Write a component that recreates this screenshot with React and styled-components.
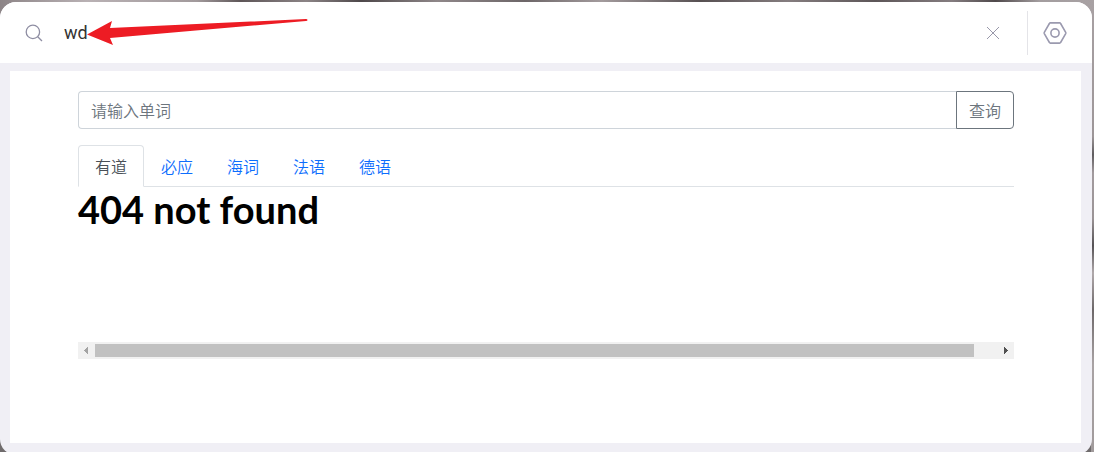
import React, { useState } from 'react';
import styled, { createGlobalStyle } from 'styled-components';

const GlobalStyle = createGlobalStyle`
  * {
    box-sizing: border-box;
  }

  body {
    margin: 0;
    overflow: hidden;
    background:
      linear-gradient(180deg, #a8a1a3, #9d9698 30%, #5f5c5f 34%, #a29b9e 38%, #9b9496 48%, #555255 54%, #b0a9ab 60%, #6d6869 68%, #a9a3a4 80%, #a09a9b) right / 3px 100% no-repeat,
      linear-gradient(90deg, #8d8587, #b9b1b4 8%, #a29a9c 18%, #5e5658 22%, #8c8486 28%, #4e484a 33%, #8f8789 40%, #6d6668 48%, #a39b9d 55%, #575052 64%, #857d7f 72%, #5d5658 80%, #857d80 87%, #4f494b 91%, #a39d9f 95%, #a8a1a3) top / 100% 40px no-repeat,
      #6f6b6c;
    color: #212529;
    font-family: 'Noto Sans CJK SC', 'Liberation Sans', sans-serif;
    font-size: 16px;
    font-weight: 350;
    line-height: 24px;
  }

  button,
  input {
    font-family: inherit;
    font-size: inherit;
    font-weight: inherit;
    line-height: inherit;
  }
`;

const Desktop = styled.main`
  padding: 2px 2px 0 0;
`;

const Window = styled.div`
  position: relative;
  overflow: hidden;
  border-radius: 16px;
  background: #f0eff5;
`;

const SearchBar = styled.header`
  display: flex;
  align-items: center;
  height: 61px;
  padding: 0 25px 0 24px;
  background: #fff;
`;

const CommandInput = styled.input`
  flex: 1;
  min-width: 0;
  margin-left: 20px;
  padding: 0;
  border: none;
  outline: none;
  background: none;
  color: #333;
  font-family: Roboto, 'Noto Sans CJK SC', sans-serif;
  font-size: 18px;
  font-weight: 400;
`;

const IconButton = styled.button`
  display: flex;
  padding: 0;
  border: none;
  background: none;
  cursor: pointer;
`;

const Divider = styled.span`
  width: 1px;
  height: 44px;
  margin: 0 15px 0 26px;
  background: #e4e4e8;
`;

const Arrow = styled.svg`
  position: absolute;
  top: 14px;
  left: 87px;
  pointer-events: none;
`;

const Panel = styled.section`
  margin: 8px 11px 12px 10px;
  padding: 20px 67px 84px 68px;
  background: #fff;
`;

const LookupForm = styled.form`
  display: flex;
  margin-bottom: 16px;
`;

const WordInput = styled.input`
  flex: 1;
  min-width: 0;
  height: 38px;
  padding: 6px 12px;
  border: 1px solid #ced4da;
  border-right: none;
  border-radius: 4px 0 0 4px;
  outline: none;

  &::placeholder {
    color: #6c757d;
    opacity: 1;
  }
`;

const LookupButton = styled.button`
  width: 58px;
  height: 38px;
  padding: 0;
  border: 1px solid #6c757d;
  border-radius: 0 4px 4px 0;
  background: #fff;
  color: #6c757d;
  cursor: pointer;
`;

const Tabs = styled.div`
  display: flex;
  border-bottom: 1px solid #dee2e6;
`;

const Tab = styled.button`
  margin-bottom: -1px;
  padding: 8px 16px;
  border: 1px solid transparent;
  border-radius: 4px 4px 0 0;
  background: none;
  color: #0d6efd;
  cursor: pointer;

  ${({ $active }) =>
    $active &&
    `
    border-color: #dee2e6 #dee2e6 #fff;
    background: #fff;
    color: #495057;
  `}
`;

const Result = styled.div`
  height: 155px;
`;

const Message = styled.h1`
  margin: 0;
  color: #000;
  font-family: Lato, sans-serif;
  font-size: 38px;
  font-weight: 700;
  line-height: 44px;
`;

const ScrollBar = styled.div`
  display: flex;
  height: 17px;
  background: #f1f1f1;
`;

const ScrollButton = styled.button`
  display: flex;
  align-items: center;
  justify-content: center;
  width: 17px;
  padding: 0;
  border: none;
  background: none;
  color: ${({ disabled }) => (disabled ? '#a3a3a3' : '#505050')};
`;

const ScrollTrack = styled.div`
  flex: 1;
  padding: 2px 0;
`;

const ScrollThumb = styled.div`
  width: 97.5%;
  height: 13px;
  background: #c1c1c1;
`;

const dictionaries = ['有道', '必应', '海词', '法语', '德语'];

const App = () => {
  const [command, setCommand] = useState('wd');
  const [word, setWord] = useState('');
  const [active, setActive] = useState('有道');

  const handleSubmit = (event) => {
    event.preventDefault();
  };

  return (
    <Desktop>
      <GlobalStyle />
      <Window>
        <SearchBar>
          <svg width="20" height="20" viewBox="0 0 20 20" fill="none" stroke="#8f8ea3" strokeWidth="1.3">
            <circle cx="8.9" cy="8.9" r="6.7" />
            <path d="M13.7 13.7l4.3 4.3" />
          </svg>
          <CommandInput
            aria-label="命令"
            value={command}
            onChange={(event) => setCommand(event.target.value)}
          />
          <IconButton type="button" aria-label="清除" onClick={() => setCommand('')}>
            <svg width="16" height="16" viewBox="0 0 16 16" fill="none" stroke="#9998aa" strokeWidth="1">
              <path d="M2 2l12 12M14 2L2 14" />
            </svg>
          </IconButton>
          <Divider />
          <IconButton type="button" aria-label="设置">
            <svg width="24" height="24" viewBox="0 0 24 24" fill="none" stroke="#9b9aaf" strokeWidth="1.6" strokeLinejoin="round">
              <path d="M7.4 1.9h9.2q.7 0 1 .6l5.1 8.9q.3.6 0 1.2l-5.1 8.9q-.3.6-1 .6H7.4q-.7 0-1-.6L1.3 12.6q-.3-.6 0-1.2L6.4 2.5q.3-.6 1-.6z" />
              <circle cx="12" cy="12" r="4.1" />
            </svg>
          </IconButton>
        </SearchBar>
        <Arrow width="221" height="30" viewBox="0 0 221 30" aria-hidden="true">
          <path d="M0 18.5L25 5l-2 7L219 3q1.5 0 1.5 1t-1.5 1L23 22l3 7z" fill="#ed1c24" />
        </Arrow>
        <Panel>
          <LookupForm onSubmit={handleSubmit}>
            <WordInput
              aria-label="单词"
              placeholder="请输入单词"
              value={word}
              onChange={(event) => setWord(event.target.value)}
            />
            <LookupButton type="submit">查询</LookupButton>
          </LookupForm>
          <Tabs role="tablist">
            {dictionaries.map((name) => (
              <Tab
                key={name}
                type="button"
                role="tab"
                aria-selected={name === active}
                $active={name === active}
                onClick={() => setActive(name)}
              >
                {name}
              </Tab>
            ))}
          </Tabs>
          <Result role="tabpanel">
            <Message>404 not found</Message>
          </Result>
          <ScrollBar>
            <ScrollButton type="button" aria-label="向左" disabled>
              <svg width="5" height="7" viewBox="0 0 5 7" fill="currentColor" shapeRendering="crispEdges">
                <path d="M4 0v7L0 3.5z" />
              </svg>
            </ScrollButton>
            <ScrollTrack>
              <ScrollThumb />
            </ScrollTrack>
            <ScrollButton type="button" aria-label="向右">
              <svg width="5" height="7" viewBox="0 0 5 7" fill="currentColor" shapeRendering="crispEdges">
                <path d="M1 0v7l4-3.5z" />
              </svg>
            </ScrollButton>
          </ScrollBar>
        </Panel>
      </Window>
    </Desktop>
  );
};

export default App;
